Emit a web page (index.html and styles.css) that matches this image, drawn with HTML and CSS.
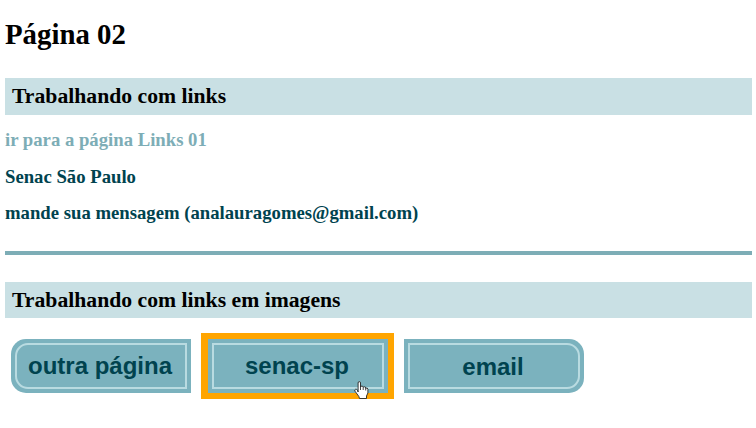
FILE: index.html
```html
<!DOCTYPE html>
<html lang="pt-BR">
<head>
<meta charset="utf-8">
<title>Página 02</title>
<link rel="stylesheet" href="styles.css">
</head>
<body>
<h1>Página 02</h1>
<h2>Trabalhando com links</h2>
<p><a class="visited" href="#">ir para a página Links 01</a></p>
<p><a href="#">Senac São Paulo</a></p>
<p><a href="#">mande sua mensagem (analauragomes@gmail.com)</a></p>
<hr>
<h2 class="images-title">Trabalhando com links em imagens</h2>
<nav class="buttons">
  <a class="button left" href="#"><span>outra página</span></a>
  <a class="button active" href="#"><span>senac-sp</span>
    <svg class="cursor" width="15" height="18" viewBox="0 0 15 18">
      <path d="M4.1 11 V2 Q4.1 .6 5.3 .6 Q6.5 .6 6.5 2 V6 Q6.9 4.9 8 5.1 Q9.1 5.2 9.2 6.3 Q10.2 5.3 11.4 6.1 L11.7 7.2 Q13.6 6.3 13.9 8.2 V12 L12.5 15 V17.5 H5.5 L4.8 15.4 L1 10.2 Q.3 8.8 1.5 8.3 Q2.6 8 3.4 9.2 Z" fill="#fff" stroke="#222" stroke-width=".9"/>
      <path d="M6.5 6 V9 M9.2 6.3 V9 M11.7 7 V9.5" fill="none" stroke="#333" stroke-width=".9"/>
    </svg>
  </a>
  <a class="button right" href="#"><span>email</span></a>
</nav>
</body>
</html>
```
FILE: styles.css
```css
body {
  margin: 0;
  padding: 17px 4px 0 5px;
  background: #fff;
  font-family: "Liberation Serif", "Times New Roman", serif;
  font-weight: bold;
  overflow: hidden;
}
h1 {
  margin: 0 0 27px;
  font-size: 28.8px;
  line-height: 34px;
  color: #000;
}
h2 {
  margin: 0 0 14px;
  padding-left: 7px;
  background: #c9e0e4;
  font-size: 21.7px;
  line-height: 37px;
  color: #000;
}
h2.images-title {
  margin-bottom: 15px;
  line-height: 36px;
}
p {
  margin: 0 0 15px;
  font-size: 18.72px;
  line-height: 22px;
}
p + p + p {
  margin-top: -1px;
  margin-bottom: 0;
}
a {
  color: #00434f;
  text-decoration: none;
}
a.visited {
  color: #7dadb6;
}
hr {
  height: 4px;
  margin: 27px 0;
  border: 0;
  background: #7dadb6;
}
.buttons {
  display: flex;
  align-items: center;
  gap: 10px;
  padding-left: 6px;
}
.button {
  position: relative;
  box-sizing: border-box;
  width: 180px;
  height: 54px;
  padding: 4px;
  background: #7bb2be;
  font: bold 24px/42px "Liberation Sans", Arial, sans-serif;
  text-align: center;
}
.button > span {
  display: block;
  box-sizing: border-box;
  height: 46px;
  padding-right: 2px;
  border: 2px solid #b9dbe1;
}
.left {
  border-radius: 15px 0 0 15px;
}
.left > span {
  border-radius: 13px 0 0 13px;
}
.right {
  border-radius: 0 15px 15px 0;
  line-height: 44px;
}
.right > span {
  border-radius: 0 13px 13px 0;
}
.active {
  box-sizing: content-box;
  width: 172px;
  height: 46px;
  border: solid #ffa500;
  border-width: 6px 6px 6px 7px;
}
.cursor {
  position: absolute;
  left: 146px;
  top: 42px;
}
```
